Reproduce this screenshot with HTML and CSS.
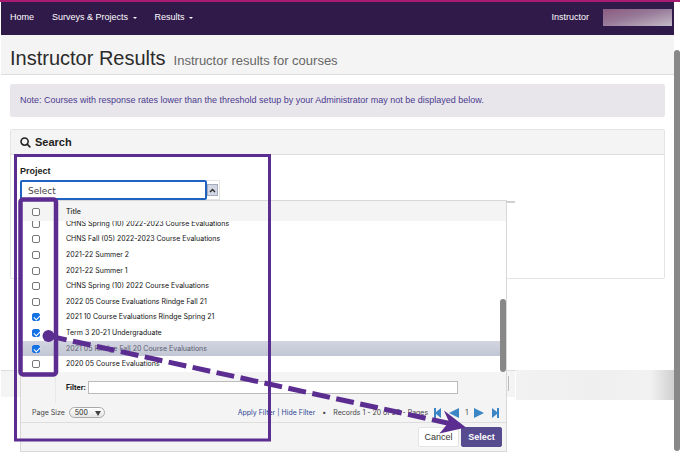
FILE: index.html
```html
<!DOCTYPE html>
<html lang="en">
<head>
<meta charset="utf-8">
<meta name="viewport" content="width=device-width, initial-scale=1">
<title>Instructor Results</title>
<link rel="stylesheet" href="styles.css">
</head>
<body>
<div class="shell">
  <div class="page">
    <nav class="nav">
      <a href="#">Home</a>
      <a href="#">Surveys &amp; Projects <span class="caret"></span></a>
      <a href="#">Results <span class="caret"></span></a>
      <a href="#" class="nav-role">Instructor</a>
      <span class="nav-user"></span>
    </nav>
    <header class="title-bar">
      <h1>Instructor Results</h1>
      <p>Instructor results for courses</p>
    </header>
    <main class="content">
      <p class="note">Note: Courses with response rates lower than the threshold setup by your Administrator may not be displayed below.</p>
      <section class="panel">
        <h2 class="panel-head">
          <svg class="search-icon" viewBox="0 0 12 12" aria-hidden="true"><circle cx="5" cy="5" r="3.9"/><path d="M7.8 7.8 11.300 11.300"/></svg>
          Search
        </h2>
        <div class="panel-body">
          <label class="field-label" for="project">Project</label>
          <div class="combo">
            <input id="project" class="combo-input" type="text" value="Select">
            <span class="combo-side">
              <button type="button" class="combo-toggle" aria-label="Close list"><svg viewBox="0 0 7 7" aria-hidden="true"><path d="M1 5 3.500 2.500 6 5"/></svg></button>
            </span>
            <div class="popup">
              <div class="popup-head">
                <input type="checkbox" aria-label="Select all">
                <span>Title</span>
              </div>
              <div class="list">
                <table class="rows">
                  <tbody>
                    <tr><td><input type="checkbox" id="r1"></td><td><label for="r1">CHNS Spring (10) 2022-2023 Course Evaluations</label></td></tr>
                    <tr><td><input type="checkbox" id="r2"></td><td><label for="r2">CHNS Fall (05) 2022-2023 Course Evaluations</label></td></tr>
                    <tr><td><input type="checkbox" id="r3"></td><td><label for="r3">2021-22 Summer 2</label></td></tr>
                    <tr><td><input type="checkbox" id="r4"></td><td><label for="r4">2021-22 Summer 1</label></td></tr>
                    <tr><td><input type="checkbox" id="r5"></td><td><label for="r5">CHNS Spring (10) 2022 Course Evaluations</label></td></tr>
                    <tr><td><input type="checkbox" id="r6"></td><td><label for="r6">2022 05 Course Evaluations Rindge Fall 21</label></td></tr>
                    <tr><td><input type="checkbox" id="r7" checked></td><td><label for="r7">2021 10 Course Evaluations Rindge Spring 21</label></td></tr>
                    <tr><td><input type="checkbox" id="r8" checked></td><td><label for="r8">Term 3 20-21 Undergraduate</label></td></tr>
                    <tr class="active"><td><input type="checkbox" id="r9" checked></td><td><label for="r9">2021 05 Rindge Fall 20 Course Evaluations</label></td></tr>
                    <tr><td><input type="checkbox" id="r10"></td><td><label for="r10">2020 05 Course Evaluations</label></td></tr>
                  </tbody>
                </table>
                <span class="list-thumb"></span>
              </div>
              <div class="filter">
                <label for="filter">Filter:</label>
                <input id="filter" type="text">
              </div>
              <div class="pager">
                <label for="size">Page Size</label>
                <span class="size"><select id="size"><option>500</option></select></span>
                <span class="pager-links"><a href="#">Apply Filter</a> | <a href="#">Hide Filter</a></span>
                <span class="dot">•</span>
                <span class="records">Records 1 - 20 of 20 - Pages</span>
                <span class="pages">
                  <button type="button" aria-label="First page"><svg viewBox="0 0 10 10"><path d="M1 0h2v4L8 0v10L3 6v4H1z"/></svg></button>
                  <button type="button" aria-label="Previous page"><svg viewBox="0 0 10 10"><path d="M10 0v10L0 5z"/></svg></button>
                  <span>1</span>
                  <button type="button" aria-label="Next page"><svg viewBox="0 0 10 10"><path d="M0 0v10l10-5z"/></svg></button>
                  <button type="button" aria-label="Last page"><svg viewBox="0 0 10 10"><path d="M9 0H7v4L2 0v10l5-4v4h2z"/></svg></button>
                </span>
              </div>
              <div class="actions">
                <button type="button" class="btn">Cancel</button>
                <button type="button" class="btn btn-primary">Select</button>
              </div>
            </div>
          </div>
        </div>
      </section>
    </main>
    <footer class="footer"><span class="footer-rule"></span><span class="footer-haze"></span></footer>
  </div>
  <div class="track"><div class="thumb"></div></div>
</div>
<svg class="callout" width="680" height="452" viewBox="0 0 680 452" aria-hidden="true">
  <rect x="15.500" y="155.500" width="254" height="284.500" stroke-width="3"/>
  <rect x="20.500" y="199.500" width="35.500" height="175" rx="2.500" stroke-width="4.500"/>
  <path d="M49 336 452 424" stroke-width="5" stroke-dasharray="18 6.500"/>
  <circle cx="48.500" cy="336" r="6" class="solid"/>
  <path d="M466 427.500 444 410.500 449 422 439.500 433.500z" class="solid"/>
</svg>
</body>
</html>
```
FILE: styles.css
```css
* { box-sizing: border-box; }

body {
  margin: 0;
  background: #fff;
  color: #222;
  font: 9px/12px "Liberation Sans", Arial, sans-serif;
}

h1, h2, p { margin: 0; }
a { color: inherit; text-decoration: none; }
button, input, select { font: inherit; margin: 0; }

.shell {
  display: flex;
  min-height: 100vh;
  border-top: 2px solid #a81b72;
}

.page {
  flex: 1;
  display: flex;
  flex-direction: column;
  padding-left: 1px;
}

.track { width: 6px; padding: 48px 0 1px; display: flex; }
.thumb { flex: 1; background: #888; border-radius: 3px; }

.nav {
  display: flex;
  align-items: center;
  height: 33px;
  gap: 18px;
  padding: 0 2px 3px 9px;
  background: #2f1a4a;
  color: #fff;
}
.nav-role { margin-left: auto; margin-right: -4px; }
.caret {
  display: inline-block;
  margin-left: 2px;
  border: 2px solid transparent;
  border-top-color: #fff;
  border-bottom: 0;
  vertical-align: middle;
}
.nav-user {
  width: 69px;
  height: 17px;
  background: linear-gradient(to bottom right, #8a5a80, #987a98 45%, #c4bcc8);
}

.title-bar {
  display: flex;
  align-items: baseline;
  gap: 8px;
  height: 40px;
  padding: 11px 9px 0;
  background: #f4f4f4;
  border-bottom: 1px solid #ddd;
}
.title-bar h1 { font-size: 20px; line-height: 24px; font-weight: 400; color: #2b2b2b; }
.title-bar p { font-size: 13px; line-height: 16px; color: #666; }

.content { padding: 9px 9px 0; }

.note {
  padding: 10px 10px 11px;
  border-radius: 2px;
  background: #e8e6eb;
  color: #4b3b8f;
}

.panel {
  margin-top: 12px;
  min-height: 150px;
  border: 1px solid #e4e4e4;
  border-radius: 2px;
}
.panel-head {
  display: flex;
  align-items: center;
  gap: 4px;
  height: 25px;
  padding: 0 9px;
  background: #f4f4f4;
  border-bottom: 1px solid #ddd;
  font-size: 11px;
}
.search-icon { width: 11px; height: 11px; fill: none; stroke: #222; stroke-width: 1.7; }
.panel-body { padding: 10px 9px; }
.field-label { display: block; margin-bottom: 3px; font-weight: 700; }

.combo { position: relative; display: flex; height: 20px; }
.combo-input {
  width: 187px;
  padding: 1px 6px 0;
  border: 2px solid #1f62c0;
  border-radius: 2px;
  background: #fff;
  color: #444;
  font-family: "DejaVu Sans", Verdana, sans-serif;
  outline: 0;
}
.combo-side { width: 13px; border: 1px solid #e4e4e4; border-left: 0; }
.combo-toggle {
  display: grid;
  place-items: center;
  width: 11px;
  height: 12px;
  margin-top: 3px;
  padding: 0;
  border: 1px solid #a5abbd;
  background: #d3d7e3;
}
.combo-toggle svg { width: 7px; height: 7px; fill: none; stroke: #333; stroke-width: 1.5; }

.popup {
  position: absolute;
  top: 100%;
  left: 0;
  width: 487px;
  border: 1px solid #d8d8d8;
  background: #f4f4f4;
  color: #111;
  font-family: Inter, "Liberation Sans", sans-serif;
  font-size: 7px;
}
.popup::after {
  content: "";
  position: absolute;
  top: 0;
  left: 100%;
  width: 9px;
  height: 2px;
  background: #d0d0d0;
}
.popup input[type="checkbox"] {
  appearance: none;
  display: block;
  width: 8px;
  height: 8px;
  border: 1px solid #777;
  border-radius: 2px;
  background: #fff;
}
.popup input[type="checkbox"]:checked {
  border-color: #1673e6;
  background: #1673e6;
}
.popup input[type="checkbox"]:checked::after {
  content: "";
  display: block;
  width: 5px;
  height: 3px;
  margin: 1px 0 0 1px;
  border: solid #fff;
  border-width: 0 0 1px 1px;
  transform: rotate(-45deg);
}
.popup-head {
  display: flex;
  align-items: center;
  gap: 26px;
  height: 20px;
  padding: 2px 11px 0;
  font-weight: 600;
  color: #444;
}

.list {
  position: relative;
  display: flex;
  align-items: flex-end;
  height: 151px;
  overflow: hidden;
  background: #fff;
}
.rows {
  flex: 1;
  height: 156px;
  margin-right: 5px;
  border-collapse: collapse;
  line-height: 10px;
}
.rows td { padding: 0; }
.rows td:first-child { width: 45px; padding-left: 11px; }
.rows label { display: block; }
.rows .active { background: linear-gradient(#d2d5e0, #c1c5d3); color: #5c6070; }
.list-thumb {
  position: absolute;
  right: 0;
  bottom: 0;
  width: 6px;
  height: 73px;
  border-radius: 3px;
  background: #888;
}

.filter {
  display: flex;
  align-items: center;
  gap: 2px;
  margin-left: 34px;
  padding: 9px 48px 9px 10px;
  border-left: 1px solid #e8e8e8;
  font-weight: 700;
}
.filter input {
  flex: 1;
  height: 13px;
  padding: 0 2px;
  border: 1px solid #bbb;
  background: #fff;
}

.pager {
  display: flex;
  align-items: center;
  height: 19px;
  padding: 0 6px 0 11px;
  color: #444;
}
.size { position: relative; margin-left: 4px; display: flex; }
.size::after {
  content: "";
  position: absolute;
  right: 4px;
  top: 4px;
  border: 3px solid transparent;
  border-top: 5px solid #444;
  border-bottom: 0;
}
.size select {
  appearance: none;
  width: 36px;
  height: 11px;
  padding: 0 5px;
  border: 1px solid #aaa;
  border-radius: 6px;
  background: linear-gradient(#fff, #e6e6e6);
  color: #222;
  line-height: 9px;
}
.pager-links { margin-left: auto; color: #2e4595; }
.dot { margin: 0 7px; }
.pages { display: flex; align-items: center; gap: 6px; margin-left: 5px; }
.pages button { display: block; width: 10px; height: 10px; padding: 0; border: 0; background: none; }
.pages svg { display: block; width: 10px; height: 10px; fill: #3d86c6; }

.actions {
  display: flex;
  justify-content: flex-end;
  gap: 2px;
  height: 29px;
  padding: 4px;
  border-top: 1px solid #ddd;
}
.btn {
  height: 20px;
  width: 41px;
  padding: 0;
  border: 1px solid #e4e4e4;
  border-radius: 2px;
  background: #fff;
  color: #333;
  font-family: "Liberation Sans", Arial, sans-serif;
  font-size: 9px;
}
.btn-primary { border-color: #574b90; background: #574b90; color: #fff; font-weight: 700; }

.footer {
  display: flex;
  justify-content: flex-end;
  gap: 7px;
  height: 27px;
  margin-top: 91px;
  border-top: 1px solid #ddd;
  background: linear-gradient(#f4f4f4, #f4f4f4) left / 514px 100% no-repeat;
}
.footer-rule { width: 1px; height: 15px; margin-top: 5px; background: #bbb; }
.footer-haze {
  width: 158px;
  height: 30px;
  margin-top: -1px;
  background: linear-gradient(to right, #f2f2f2, #efefef 50%, #f2f2f2 85%, #d0d0d0);
}

.callout { position: absolute; top: 0; left: 0; fill: none; stroke: #5c2d91; pointer-events: none; }
.callout .solid { fill: #5c2d91; stroke: none; }
```
